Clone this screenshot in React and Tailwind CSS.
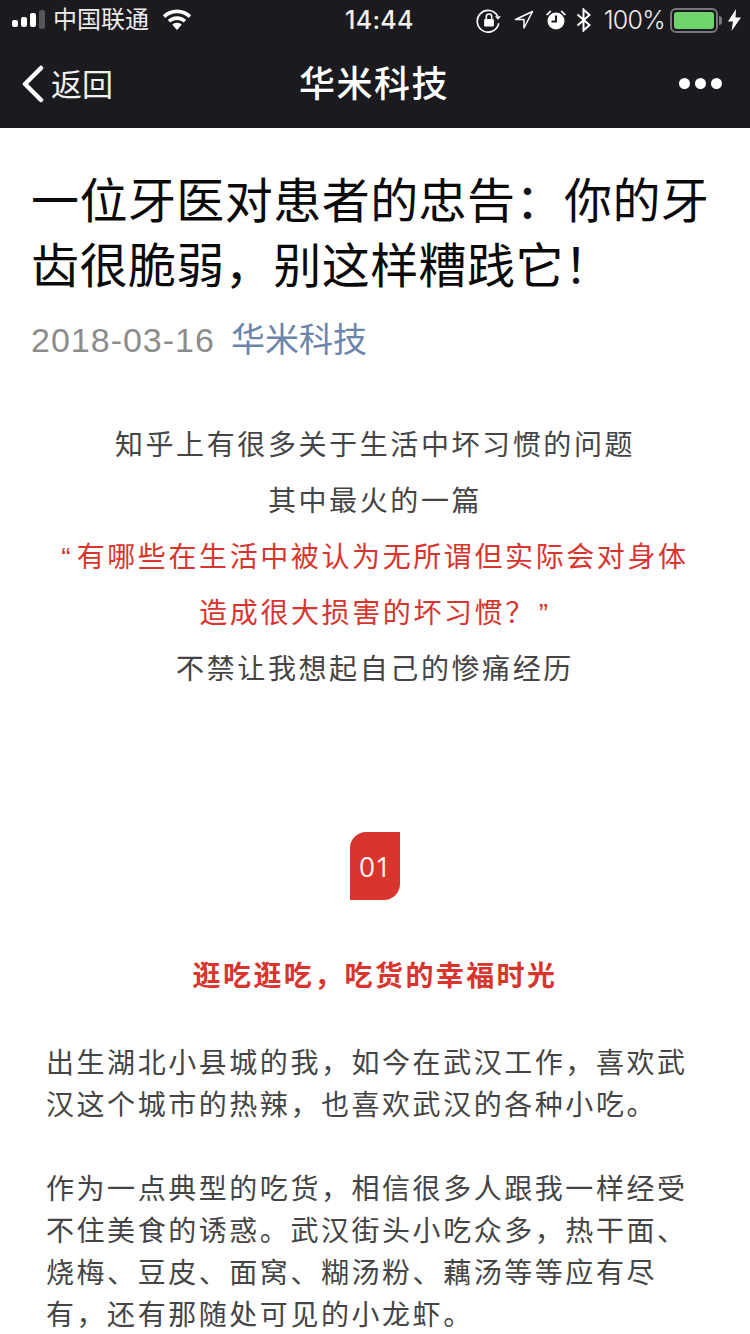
const cjk = "font-['Liberation_Sans','Noto_Sans_CJK_SC',sans-serif]";

const StatusBar = () => (
    <div className="flex items-center h-10 pl-3 pr-[9px] text-white relative">
        <div className="flex items-center gap-[3px]">
            <span className="w-[6px] h-[7px] rounded-[2px] bg-white mt-[6px]"></span>
            <span className="w-[6px] h-[10px] rounded-[2px] bg-white mt-[3px]"></span>
            <span className="w-[6px] h-[14px] rounded-[2px] bg-white mt-[-1px]"></span>
            <span className="w-[6px] h-[19px] rounded-[2px] bg-[#55555a] mt-[-1px]"></span>
        </div>
        <span className="ml-[8px] text-[24px] leading-none text-[#ededed]">中国联通</span>
        <svg width="30" height="22" viewBox="0 0 30 22" className="ml-[13px]" fill="white">
            <path d="M15 0.5C9.5 0.5 4.5 2.6 0.8 6.2L3.3 8.9C6.3 5.9 10.4 4.2 15 4.2s8.700 1.700 11.700 4.700l2.500-2.700C25.500 2.600 20.500 0.500 15 0.500z" />
            <path d="M15 7.200c-3.600 0-6.800 1.400-9.200 3.700l2.500 2.700c1.700-1.700 4.100-2.700 6.700-2.700s5 1 6.700 2.700l2.500-2.700c-2.400-2.300-5.600-3.700-9.200-3.700z" />
            <path d="M15 13.800c-1.900 0-3.500 0.700-4.700 1.900L15 21l4.700-5.300c-1.200-1.200-2.800-1.900-4.700-1.900z" />
        </svg>
        <span className="absolute left-[345px] top-[7px] text-[25px] leading-[26px] font-medium tracking-[0.3px] text-[#f2f2f2] font-['Inter',sans-serif]">14:44</span>
        <div className="ml-auto flex items-center">
            <svg width="26" height="26" viewBox="0 0 24 24" fill="none" stroke="white" strokeWidth="1.500">
                <path d="M20 8.500A10 10 0 1 0 21 15" />
                <path d="M17.500 8.500h5.500l-2.800 3.200z" fill="white" stroke="none" />
                <rect x="7.500" y="11" width="9" height="7" rx="1" fill="white" stroke="none" />
                <path d="M9.500 11V9a2.500 2.500 0 0 1 5 0v2" strokeWidth="1.400" />
            </svg>
            <svg width="20" height="20" viewBox="0 0 20 20" className="ml-[12px]" fill="none" stroke="white" strokeWidth="1.500" strokeLinejoin="round">
                <path d="M18.500 1.500L1.500 9.500h8.500v8.500z" />
            </svg>
            <svg width="22" height="22" viewBox="0 0 22 22" className="ml-[11px]" fill="white">
                <circle cx="11" cy="12" r="8.500" />
                <path d="M1 5.500L5 1.500l1.500 1L2.500 6.500zM21 5.500l-4-4-1.500 1 4 4z" />
                <path d="M11 6.500v6H6.500" fill="none" stroke="#1a1a1f" strokeWidth="2" />
            </svg>
            <svg width="16" height="24" viewBox="0 0 16 24" className="ml-[9px]" fill="none" stroke="white" strokeWidth="2">
                <path d="M1.500 6.500L13.500 17 7.500 22.500V1.500L13.500 7 1.500 17.500" />
            </svg>
            <span className="ml-[12px] text-[25px] leading-none font-light text-[#ededed] font-['Inter',sans-serif] tracking-[-0.7px]">100%</span>
            <div className="ml-[5px] w-[48px] h-[25px] rounded-[6px] border-2 border-[#77777c] p-[2px]">
                <div className="w-full h-full rounded-[3px] bg-[#6fd46c]"></div>
            </div>
            <span className="ml-[1px] w-[3px] h-[9px] rounded-r-[3px] bg-[#77777c]"></span>
            <svg width="13" height="22" viewBox="0 0 13 22" className="ml-[6px]" fill="white">
                <path d="M8 0L0 12.500h5L3.500 22 13 8.500H7.500z" />
            </svg>
        </div>
    </div>
);

const NavBar = () => (
    <div className="flex items-center h-[88px] pl-[22px] pr-[28px] pb-[1px] text-white relative">
        <svg width="22" height="38" viewBox="0 0 22 38" fill="none" stroke="white" strokeWidth="4.500" strokeLinecap="round" strokeLinejoin="round">
            <path d="M19 3L3 19l16 16" />
        </svg>
        <span className="ml-[7px] mt-[4px] text-[31px] leading-none text-[#f0f0f0]">返回</span>
        <span className="absolute left-[299px] top-[23px] text-[36px] leading-[44px] font-medium tracking-[1.500px]">华米科技</span>
        <div className="ml-auto flex gap-[5px]">
            <span className="w-[11px] h-[11px] rounded-full bg-white"></span>
            <span className="w-[11px] h-[11px] rounded-full bg-white"></span>
            <span className="w-[11px] h-[11px] rounded-full bg-white"></span>
        </div>
    </div>
);

const Center = ({ children, red }) => (
    <p className={`text-center tracking-[2.6px] ${red ? "text-[#d8352e]" : "text-[#454545]"}`}>{children}</p>
);

const App = () => {
    return <div className={`w-[750px] h-[1334px] overflow-hidden bg-white ${cjk}`}>
        <div className="bg-[#1a1a1f]">
            <StatusBar />
            <NavBar />
        </div>

        <div className="px-[31px] pt-[41px]">
            <h1 className="text-[48px] leading-[65px] text-[#0a0a0a] tracking-[0.45px]">一位牙医对患者的忠告：你的牙<br />齿很脆弱，别这样糟践它！</h1>
            <div className="flex items-center gap-[16px] mt-[16px] text-[34px] leading-[50px]">
                <span className="text-[#8c8c8c] tracking-[1px]">2018-03-16</span>
                <span className="text-[#6b85ab]">华米科技</span>
            </div>
        </div>

        <div className="mt-[53px] text-[28px] leading-[56px]">
            <Center>知乎上有很多关于生活中坏习惯的问题</Center>
            <Center>其中最火的一篇</Center>
            <Center red><span className="tracking-[6px]">“</span>有哪些在生活中被认为无所谓但实际会对身体</Center>
            <Center red>造成很大损害的坏习惯？<span className="ml-[3px]">”</span></Center>
            <Center>不禁让我想起自己的惨痛经历</Center>
        </div>

        <div className="flex justify-center mt-[134px]">
            <div className="w-[50px] h-[68px] bg-[#d8352e] rounded-tl-[16px] rounded-br-[16px] flex items-center justify-center text-[#fdf3ee] text-[28px] font-['Open_Sans',sans-serif]">01</div>
        </div>

        <h2 className="mt-[54px] text-center text-[28px] leading-[46px] font-bold text-[#d8352e] tracking-[2.4px]">逛吃逛吃，吃货的幸福时光</h2>

        <div className="px-[46px] mt-[43px] text-[28px] leading-[42px] text-[#454545] tracking-[2.55px]">
            <p>出生湖北小县城的我，如今在武汉工作，喜欢武<br />汉这个城市的热辣，也喜欢武汉的各种小吃。</p>
            <p className="mt-[42px]">作为一点典型的吃货，相信很多人跟我一样经受<br />不住美食的诱惑。武汉街头小吃众多，热干面、<br />烧梅、豆皮、面窝、糊汤粉、藕汤等等应有尽<br />有，还有那随处可见的小龙虾。</p>
        </div>
    </div>
};

export default App;
